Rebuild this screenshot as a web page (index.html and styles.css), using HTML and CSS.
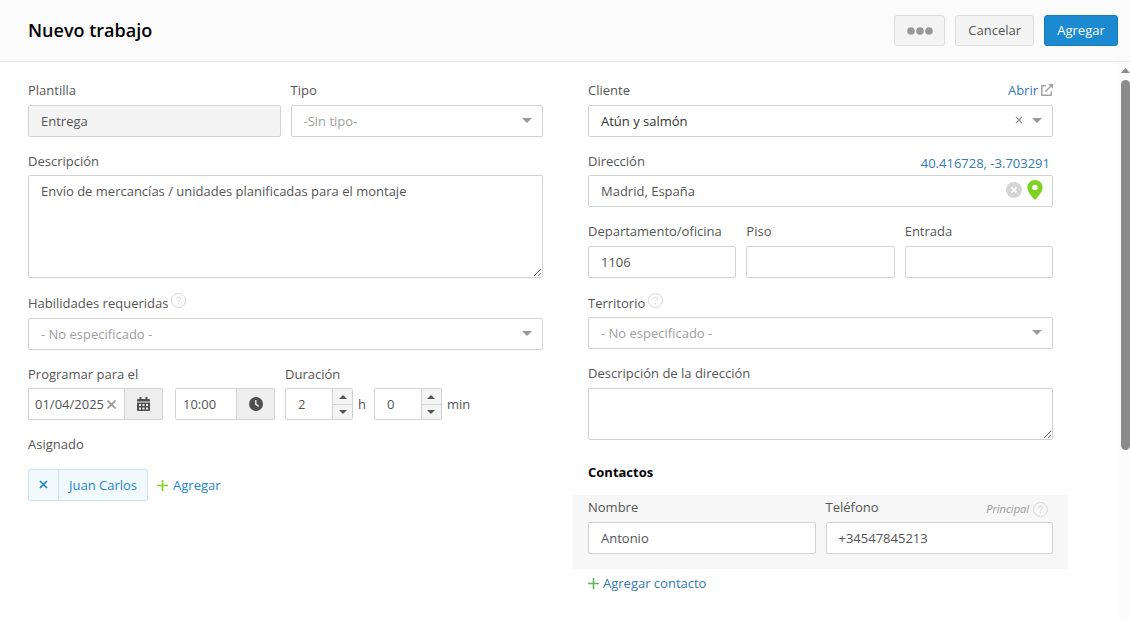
FILE: index.html
```html
<!DOCTYPE html>
<html lang="es">
<head>
<meta charset="utf-8">
<meta name="viewport" content="width=device-width, initial-scale=1">
<title>Nuevo trabajo</title>
<link rel="stylesheet" href="styles.css">
</head>
<body>
<form class="page">
  <header class="header">
    <h1 class="title">Nuevo trabajo</h1>
    <div class="actions">
      <button type="button" class="btn btn-more" aria-label="Más opciones">
        <svg width="26" height="8" viewBox="0 0 26 8" fill="#999"><circle cx="4" cy="4" r="3.8"/><circle cx="13" cy="4" r="3.8"/><circle cx="22" cy="4" r="3.8"/></svg>
      </button>
      <button type="button" class="btn">Cancelar</button>
      <button type="button" class="btn btn-primary">Agregar</button>
    </div>
  </header>

  <div class="body">
    <main class="columns">
      <section class="column">
        <div class="row row-two row-lead">
          <div class="field">
            <label class="label" for="plantilla">Plantilla</label>
            <input class="control control-locked" id="plantilla" value="Entrega" readonly>
          </div>
          <div class="field">
            <label class="label" for="tipo">Tipo</label>
            <div class="stack">
              <select class="control control-empty" id="tipo"><option>-Sin tipo-</option></select>
              <span class="tools"><svg width="10" height="5" viewBox="0 0 10 5"><path d="M0 0h10L5 5z" fill="#999"/></svg></span>
            </div>
          </div>
        </div>

        <div class="row field">
          <label class="label label-low" for="descripcion">Descripción</label>
          <textarea class="control area area-tall" id="descripcion">Envío de mercancías / unidades planificadas para el montaje</textarea>
        </div>

        <div class="row row-lead field">
          <div class="label label-help">
            <label for="habilidades">Habilidades requeridas</label>
            <span class="help"><svg width="15" height="15" viewBox="0 0 15 15" fill="none" stroke="#d6d6d6"><circle cx="7.500" cy="7.500" r="7"/><path d="M5.500 6.200c0-1.300.8-2 2-2s2 .7 2 1.700c0 1.400-2 1.500-2 3M7.500 10v1.300"/></svg></span>
          </div>
          <div class="stack">
            <select class="control control-empty" id="habilidades"><option>- No especificado -</option></select>
            <span class="tools"><svg width="10" height="5" viewBox="0 0 10 5"><path d="M0 0h10L5 5z" fill="#999"/></svg></span>
          </div>
        </div>

        <div class="row schedule">
          <div class="field">
            <label class="label label-low" for="fecha">Programar para el</label>
            <div class="schedule-inputs">
              <div class="group">
                <div class="stack">
                  <input class="control control-date" id="fecha" value="01/04/2025">
                  <button type="button" class="tools tools-date plain" aria-label="Borrar fecha"><svg width="9" height="9" viewBox="0 0 9 9"><path d="M.5.5l8 8M8.500.5l-8 8" stroke="#999" stroke-width="1.700"/></svg></button>
                </div>
                <button type="button" class="addon" aria-label="Calendario">
                  <svg width="13" height="14" viewBox="0 0 13 14"><path fill="#4f4f4f" fill-rule="evenodd" d="M2.500 0h2v2h4V0h2v2H12q1 0 1 1v1.500H0V3q0-1 1-1h1.500zM0 5.500h13V13q0 1-1 1H1q-1 0-1-1zM2 7v2h2V7zm3.500 0v2h2V7zM9 7v2h2V7zM2 10.500v2h2v-2zm3.500 0v2h2v-2zm3.500 0v2h2v-2z"/></svg>
                </button>
              </div>
              <div class="group">
                <input class="control control-time" aria-label="Hora" value="10:00">
                <button type="button" class="addon" aria-label="Elegir hora">
                  <svg width="14" height="14" viewBox="0 0 14 14"><circle cx="7" cy="7" r="7" fill="#4f4f4f"/><path d="M6.800 3v4.300l3 2" fill="none" stroke="#eee" stroke-width="1.400"/></svg>
                </button>
              </div>
            </div>
          </div>
          <div class="field">
            <label class="label label-low" for="horas">Duración</label>
            <div class="duration">
              <div class="group">
                <input class="control control-number" id="horas" value="2">
                <div class="spinner">
                  <button type="button" aria-label="Más horas"><svg width="8" height="4" viewBox="0 0 8 4"><path d="M0 4h8L4 0z" fill="#555"/></svg></button>
                  <button type="button" aria-label="Menos horas"><svg width="8" height="4" viewBox="0 0 8 4"><path d="M0 0h8L4 4z" fill="#555"/></svg></button>
                </div>
              </div>
              <label class="unit unit-hour" for="horas">h</label>
              <div class="group">
                <input class="control control-number" id="minutos" value="0">
                <div class="spinner">
                  <button type="button" aria-label="Más minutos"><svg width="8" height="4" viewBox="0 0 8 4"><path d="M0 4h8L4 0z" fill="#555"/></svg></button>
                  <button type="button" aria-label="Menos minutos"><svg width="8" height="4" viewBox="0 0 8 4"><path d="M0 0h8L4 4z" fill="#555"/></svg></button>
                </div>
              </div>
              <label class="unit" for="minutos">min</label>
            </div>
          </div>
        </div>

        <div class="field">
          <span class="label label-assigned">Asignado</span>
          <div class="assigned">
            <div class="chip">
              <button type="button" class="chip-remove" aria-label="Quitar a Juan Carlos"><svg width="9" height="9" viewBox="0 0 9 9"><path d="M1 1l7 7M8 1L1 8" stroke="#1b87cc" stroke-width="1.700"/></svg></button>
              <span class="chip-name">Juan Carlos</span>
            </div>
            <a class="add" href="#"><svg width="11" height="11" viewBox="0 0 11 11"><path d="M5.500 0v11M0 5.500h11" stroke="#7ed321" stroke-width="1.600"/></svg>Agregar</a>
          </div>
        </div>
      </section>

      <section class="column">
        <div class="row row-lead field">
          <div class="label label-split">
            <label for="cliente">Cliente</label>
            <a class="link" href="#">Abrir<svg width="12" height="12" viewBox="0 0 12 12" fill="none" stroke="#a3a3a3" stroke-width="1.500"><path d="M5 1.800H.8v9.400h9.400V7.500M4.500 7.500l6-6"/><path d="M7.200 0H12v4.800z" fill="#a3a3a3" stroke="none"/></svg></a>
          </div>
          <div class="stack">
            <select class="control control-dark" id="cliente"><option>Atún y salmón</option></select>
            <span class="tools"><svg width="8" height="8" viewBox="0 0 8 8"><path d="M1 1l6 6M7 1L1 7" stroke="#8c8c8c" stroke-width="1.100"/></svg><svg width="10" height="5" viewBox="0 0 10 5"><path d="M0 0h10L5 5z" fill="#999"/></svg></span>
          </div>
        </div>

        <div class="row field">
          <div class="label label-low label-split">
            <label for="direccion">Dirección</label>
            <a class="link link-coords" href="#">40.416728, -3.703291</a>
          </div>
          <div class="stack">
            <input class="control" id="direccion" value="Madrid, España">
            <span class="tools tools-map">
              <svg width="16" height="16" viewBox="0 0 16 16"><circle cx="8" cy="8" r="8" fill="#d6d6d6"/><path d="M5.500 5.500l5 5M10.500 5.500l-5 5" stroke="#fff" stroke-width="1.700"/></svg>
              <svg width="16" height="20" viewBox="0 0 16 20"><path fill="#7ed321" fill-rule="evenodd" d="M8 0C3.500 0 .4 3.300.4 7.500.4 12 5 16.500 8 20c3-3.500 7.600-8 7.600-12.500C15.600 3.300 12.500 0 8 0zm0 4.700a2.700 2.700 0 1 1 0 5.400 2.700 2.700 0 0 1 0-5.400z"/></svg>
            </span>
          </div>
        </div>

        <div class="row row-three">
          <div class="field"><label class="label" for="depto">Departamento/oficina</label><input class="control" id="depto" value="1106"></div>
          <div class="field"><label class="label" for="piso">Piso</label><input class="control" id="piso"></div>
          <div class="field"><label class="label" for="entrada">Entrada</label><input class="control" id="entrada"></div>
        </div>

        <div class="row field">
          <div class="label label-help label-territory">
            <label for="territorio">Territorio</label>
            <span class="help"><svg width="15" height="15" viewBox="0 0 15 15" fill="none" stroke="#d6d6d6"><circle cx="7.500" cy="7.500" r="7"/><path d="M5.500 6.200c0-1.300.8-2 2-2s2 .7 2 1.700c0 1.400-2 1.500-2 3M7.500 10v1.300"/></svg></span>
          </div>
          <div class="stack">
            <select class="control control-empty" id="territorio"><option>- No especificado -</option></select>
            <span class="tools"><svg width="10" height="5" viewBox="0 0 10 5"><path d="M0 0h10L5 5z" fill="#999"/></svg></span>
          </div>
        </div>

        <div class="field">
          <label class="label" for="detalle">Descripción de la dirección</label>
          <textarea class="control area area-short" id="detalle"></textarea>
        </div>

        <h2 class="subtitle">Contactos</h2>
        <div class="contact">
          <div class="field"><label class="label" for="nombre">Nombre</label><input class="control" id="nombre" value="Antonio"></div>
          <div class="field">
            <div class="label label-split">
              <label for="telefono">Teléfono</label>
              <span class="primary">Principal<svg width="15" height="15" viewBox="0 0 15 15" fill="none" stroke="#d6d6d6"><circle cx="7.500" cy="7.500" r="7"/><path d="M5.500 6.200c0-1.300.8-2 2-2s2 .7 2 1.700c0 1.400-2 1.500-2 3M7.500 10v1.300"/></svg></span>
            </div>
            <input class="control" id="telefono" value="+34547845213">
          </div>
        </div>
        <a class="add add-contact" href="#"><svg width="11" height="11" viewBox="0 0 11 11"><path d="M5.500 0v11M0 5.500h11" stroke="#5cb85c" stroke-width="1.600"/></svg>Agregar contacto</a>
      </section>
    </main>

    <div class="scroll" aria-hidden="true">
      <svg width="9" height="5" viewBox="0 0 9 5"><path d="M0 5h9L4.500 0z" fill="#8b8b8b"/></svg>
      <div class="thumb"></div>
    </div>
  </div>
</form>
</body>
</html>
```
FILE: styles.css
```css
* { box-sizing: border-box; }

body {
  margin: 0;
  font: 13px/18px "Open Sans", "Noto Sans", sans-serif;
  color: #555;
  background: #fff;
}

input, select, textarea, button { font: inherit; color: inherit; }
button { cursor: pointer; }
svg { display: block; flex: none; }
a { text-decoration: none; }

.page { display: flex; flex-direction: column; min-height: 100vh; }

.header {
  display: flex;
  align-items: center;
  justify-content: space-between;
  padding: 15px 12px 15px 28px;
  background: #fbfbfb;
  border-bottom: 1px solid #e8e8e8;
}
.title { margin: 0 0 2px; font-size: 18px; line-height: 24px; font-weight: 600; color: #000; }
.actions { display: flex; gap: 10px; }
.btn {
  display: flex;
  align-items: center;
  justify-content: center;
  height: 31px;
  padding: 0 12px 1px;
  border: 1px solid #ddd;
  border-radius: 3px;
  background: #f4f4f4;
}
.btn-more { width: 51px; padding: 0; }
.btn-primary { min-width: 74px; background: #1c8ad1; border-color: #177bbb; color: #fff; }

.body { display: flex; flex: 1; }
.columns {
  flex: 1;
  display: grid;
  grid-template-columns: 515fr 465fr;
  column-gap: 45px;
  padding: 19px 65px 20px 28px;
}
.column { min-width: 0; }

.row { margin-bottom: 15px; }
.row-lead { margin-bottom: 14px; }
.row-two { display: grid; grid-template-columns: 1fr 1fr; gap: 10px; }
.row-three { display: grid; grid-template-columns: repeat(3, 1fr); gap: 10px; }

.field { display: flex; flex-direction: column; min-width: 0; }
.label { height: 18px; margin-bottom: 6px; white-space: nowrap; }
.label-low { line-height: 20px; }
.label-split { display: flex; justify-content: space-between; }
.label-help { display: flex; gap: 3px; height: 19px; line-height: 20px; }
.label-territory { height: 18px; }
.label-assigned { margin-bottom: 16px; }

.control {
  width: 100%;
  height: 32px;
  margin: 0;
  padding: 0 12px;
  border: 1px solid #d2d2d2;
  border-radius: 2px;
  background: #fff;
  appearance: none;
  outline: none;
}
.control-locked { background: #f4f4f4; }
.control-empty { color: #a0a0a0; }
.control-dark { color: #333; }
.area { display: block; padding-top: 6px; resize: vertical; }
.area-tall { height: 103px; }
.area-short { height: 52px; }

.stack { display: grid; align-items: center; }
.stack > * { grid-area: 1 / 1; }
.tools {
  display: flex;
  align-items: center;
  gap: 9px;
  justify-self: end;
  padding: 0 11px 2px 0;
  pointer-events: none;
}
.tools-map { gap: 5px; padding: 0 10px 3px 0; }
.plain { border: 0; background: none; }
.tools-date { padding: 0 9px 0 0; pointer-events: auto; }

.schedule { display: flex; gap: 10px; }
.schedule-inputs { display: flex; gap: 12px; }
.group { display: flex; }
.group .control { border-radius: 2px 0 0 2px; }
.group .control-date { width: 97px; padding: 0 6px; }
.group .control-time { width: 62px; padding: 0 7px; }
.group .control-number { width: 48px; }
.addon {
  display: grid;
  place-items: center;
  width: 39px;
  height: 32px;
  margin-left: -1px;
  padding: 0;
  border: 1px solid #d2d2d2;
  border-radius: 0 2px 2px 0;
  background: #eee;
}
.duration { display: flex; align-items: center; gap: 5px; }
.unit-hour { margin-right: 3px; }
.spinner {
  display: grid;
  grid-template-rows: 1fr 1fr;
  width: 21px;
  height: 32px;
  margin-left: -1px;
  border: 1px solid #d2d2d2;
  border-radius: 0 2px 2px 0;
  background: #f4f4f4;
}
.spinner button { display: grid; place-items: center; padding: 0; border: 0; background: none; }
.spinner button + button { border-top: 1px solid #d2d2d2; }

.assigned { display: flex; align-items: center; gap: 9px; }
.chip {
  display: flex;
  height: 32px;
  border: 1px solid #c5e4f2;
  border-radius: 2px;
  background: #f1f9fd;
  color: #1b87cc;
}
.chip-remove {
  display: grid;
  place-items: center;
  width: 30px;
  padding: 0 0 2px;
  border: 0;
  border-right: 1px solid #c5e4f2;
  background: none;
}
.chip-name { padding: 0 10px; line-height: 31px; }

.link { display: flex; align-items: center; gap: 3px; color: #337ab7; }
.link-coords { padding: 5px 3px 0 0; }
.add { display: flex; align-items: center; gap: 5px; color: #1b87cc; }
.add-contact { gap: 4px; color: #337ab7; }

.subtitle { margin: 23px 0 14px; font-size: 13px; line-height: 18px; font-weight: 700; color: #000; }
.contact {
  display: grid;
  grid-template-columns: 1fr 1fr;
  gap: 10px;
  margin: 0 -15px 5px;
  padding: 3px 15px 15px;
  background: #f7f7f7;
}
.primary {
  display: flex;
  align-items: center;
  gap: 4px;
  padding: 4px 5px 0 0;
  font-size: 11px;
  font-style: italic;
  color: #999;
}

.scroll {
  display: flex;
  flex-direction: column;
  gap: 7px;
  width: 12px;
  padding: 6px 0 0 3px;
  background: #fcfcfc;
}
.thumb { height: 370px; border-radius: 5px; background: #8b8b8b; }
```
